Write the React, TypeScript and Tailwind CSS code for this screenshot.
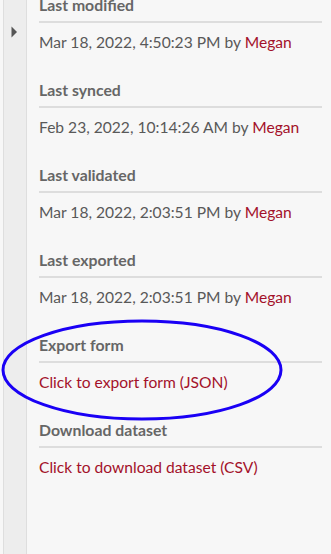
import React from "react";

const rows: { title: string; value?: string; link?: string }[] = [
  { title: "Last modified", value: "Mar 18, 2022, 4:50:23 PM" },
  { title: "Last synced", value: "Feb 23, 2022, 10:14:26 AM" },
  { title: "Last validated", value: "Mar 18, 2022, 2:03:51 PM" },
  { title: "Last exported", value: "Mar 18, 2022, 2:03:51 PM" },
  { title: "Export form", link: "Click to export form (JSON)" },
  { title: "Download dataset", link: "Click to download dataset (CSV)" },
];

export default function App() {
  return (
    <div
      className="relative flex w-[331px] h-[554px] overflow-hidden bg-[#f7f7f7]"
      style={{ fontFamily: "Lato, 'Open Sans', sans-serif" }}
    >
      <div className="w-[3px] shrink-0 bg-[#f7f7f7]" />
      <div className="w-[24px] shrink-0 border-l border-r border-[#dedede] bg-[#ededed] relative">
        <svg className="absolute left-[6px] top-[25px]" width="9" height="14" viewBox="0 0 9 14">
          <polygon points="1.5,1.5 7,7 1.5,12.5" fill="#555" />
        </svg>
      </div>
      <div className="flex-1 pl-[12px] pr-[9px] mt-[-5px]">
        {rows.map((r) => (
          <div key={r.title} className="mb-[28px]">
            <div className="text-[15.8px] leading-[20px] font-bold text-[#666]">{r.title}</div>
            <div className="mt-[6px] h-[2px] bg-[#dddddd]" />
            <div className="mt-[9px] text-[15.6px] leading-[20px] text-[#595959] whitespace-nowrap">
              {r.value ? (
                <>
                  {r.value} by <span className="text-[#a3112a]">Megan</span>
                </>
              ) : (
                <span className="text-[#a3112a]">{r.link}</span>
              )}
            </div>
          </div>
        ))}
      </div>
      <svg className="absolute left-0 top-0 pointer-events-none" width="331" height="554">
        <ellipse cx="142" cy="370" rx="139" ry="49" fill="none" stroke="#1a00f5" strokeWidth="3" />
      </svg>
    </div>
  );
}
